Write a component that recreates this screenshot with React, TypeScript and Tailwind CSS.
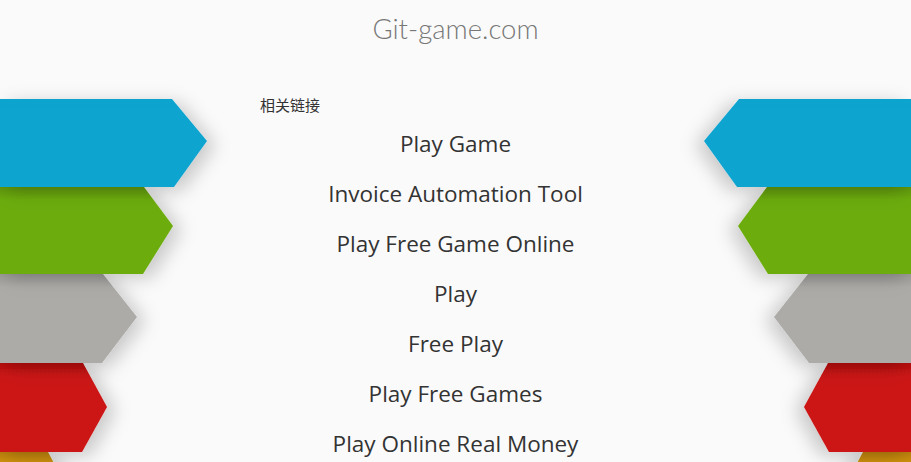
const links = [
  'Play Game',
  'Invoice Automation Tool',
  'Play Free Game Online',
  'Play',
  'Free Play',
  'Play Free Games',
  'Play Online Real Money',
];

const bands = [
  { id: 'orange', top: '#b97f0a', color: '#d4960e', points: '0,353 48,353 72,398 48,443 0,443' },
  { id: 'red', top: '#b31010', color: '#cc1313', points: '0,264 83,264 107,308 82,353 0,353' },
  { id: 'gray', top: '#9a9996', color: '#acaba8', points: '0,175 103,175 137,218 102,264 0,264' },
  { id: 'green', top: '#5e950f', color: '#6cac11', points: '0,88 144,88 173,127 143,175 0,175' },
  { id: 'blue', top: '#10a3cf', color: '#11a4d0', points: '0,0 172,0 207,42 174,88 0,88' },
];

function Arrows({ side }: { side: 'l' | 'r' }) {
  return (
    <svg
      width="210"
      height="363"
      viewBox="0 0 210 363"
      className={side === 'r' ? '-scale-x-100 shrink-0 overflow-visible' : 'shrink-0 overflow-visible'}
    >
      <defs>
        <filter id={`sh-${side}`} x="-20%" y="-30%" width="180%" height="160%">
          <feDropShadow dx="8" dy="4" stdDeviation="9" floodColor="#000" floodOpacity="0.2" />
        </filter>
        {bands.map((b) => (
          <linearGradient key={b.id} id={`g-${side}-${b.id}`} x1="0" y1="0" x2="0" y2="1">
            <stop offset="0" stopColor={b.top} />
            <stop offset="0.15" stopColor={b.color} />
            <stop offset="1" stopColor={b.color} />
          </linearGradient>
        ))}
      </defs>
      {bands.map((b) => (
        <polygon key={b.id} points={b.points} fill={`url(#g-${side}-${b.id})`} filter={`url(#sh-${side})`} />
      ))}
    </svg>
  );
}

export default function App() {
  return (
    <div className="h-[462px] overflow-hidden bg-[#fafafa]">
      <header className="h-[95px] text-center">
        <h1 className="text-[27.5px] leading-[57px] font-light text-[#777] font-['Lato',sans-serif]">Git-game.com</h1>
      </header>
      <div className="flex">
        <div className="mt-1">
          <Arrows side="l" />
        </div>
        <main className="relative z-10 flex-1 px-[50px]">
          <h2 className="text-[15px] leading-5 text-[#333] font-['Noto_Sans_CJK_SC',sans-serif]">相关链接</h2>
          <ul className="mt-[4px] text-center font-['Open_Sans',sans-serif] text-[22.5px] text-[#333]">
            {links.map((l) => (
              <li key={l} className="h-[50px] leading-[50px]">
                <a href="#">{l}</a>
              </li>
            ))}
          </ul>
        </main>
        <div className="mt-1">
          <Arrows side="r" />
        </div>
      </div>
    </div>
  );
}
